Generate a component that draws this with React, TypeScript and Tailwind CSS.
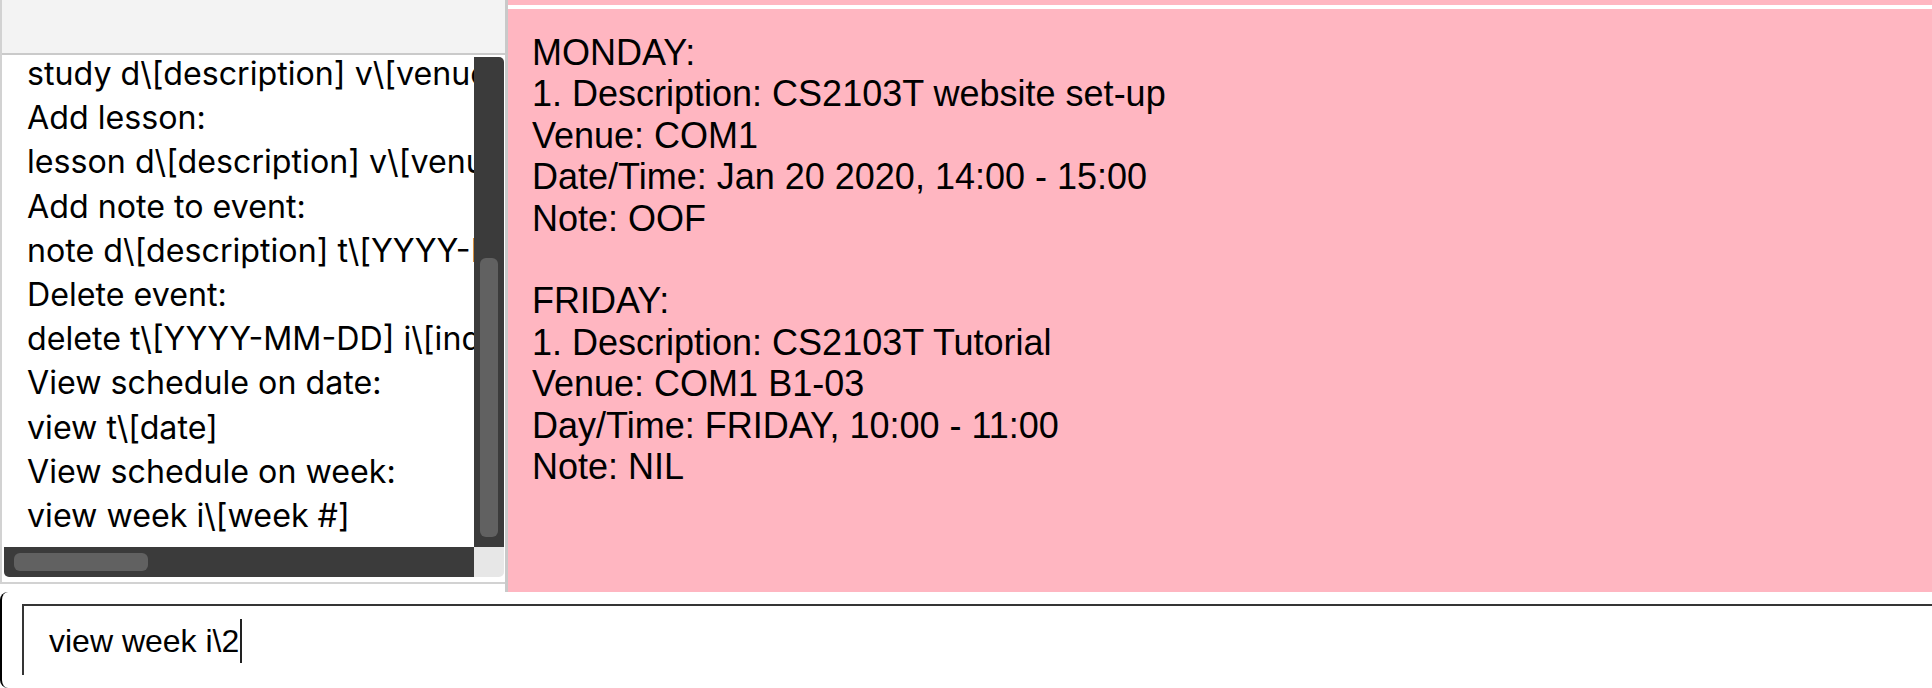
import React from 'react';

const helpLines = [
  'study d\\[description] v\\[venue] t\\[YYYY-MM-DD HH:MM-HH:MM]',
  'Add lesson:',
  'lesson d\\[description] v\\[venue] t\\[DAY HH:MM-HH:MM]',
  'Add note to event:',
  'note d\\[description] t\\[YYYY-MM-DD] i\\[index]',
  'Delete event:',
  'delete t\\[YYYY-MM-DD] i\\[index]',
  'View schedule on date:',
  'view t\\[date]',
  'View schedule on week:',
  'view week i\\[week #]',
];

const scheduleLines = [
  'MONDAY:',
  '1. Description: CS2103T website set-up',
  'Venue: COM1',
  'Date/Time: Jan 20 2020, 14:00 - 15:00',
  'Note: OOF',
  '',
  'FRIDAY:',
  '1. Description: CS2103T Tutorial',
  'Venue: COM1 B1-03',
  'Day/Time: FRIDAY, 10:00 - 11:00',
  'Note: NIL',
];

const HelpPanel: React.FC = () => (
  <div className="flex flex-col w-[508px] h-[592px] border-r-[3px] border-[#c9c9c9] bg-white">
    <div className="flex flex-col h-[584px] border-l-2 border-b-2 border-[#d2d2d2]">
      <div className="h-[55px] bg-[#f3f3f3] border-b-2 border-[#cacaca]" />
      {/* scroll pane */}
      <div className="flex-1 min-h-0 pl-[2px] pt-[2px] pr-[1px] pb-[5px] bg-white">
        <div className="grid h-full grid-cols-[1fr_30px] grid-rows-[1fr_30px]">
          <div className="overflow-hidden bg-white">
            <div
              className="-mt-[5px] pl-[23px] text-[32.2px] leading-[44.2px] text-black whitespace-nowrap"
              style={{ fontFamily: 'Inter, "Noto Sans", sans-serif' }}
            >
              {helpLines.map((l, i) => (
                <div key={i}>{l}</div>
              ))}
            </div>
          </div>
          <div className="bg-[#3b3b3b] rounded-tr-[5px] px-[6px] pt-[201px] pb-[10px]">
            <div className="h-full rounded-[6px] bg-[#616161]" />
          </div>
          <div className="bg-[#3b3b3b] rounded-bl-[5px] pl-[10px] py-[6px]">
            <div className="h-full w-[134px] rounded-[6px] bg-[#616161]" />
          </div>
          <div className="bg-[#e7e7e7] rounded-br-[5px]" />
        </div>
      </div>
    </div>
  </div>
);

const SchedulePanel: React.FC = () => (
  <div className="flex-1 h-[592px] bg-[#ffb6c1] flex flex-col">
    <div className="h-[5px]" />
    <div className="h-[4px] bg-white" />
    <div
      className="pt-[23px] pl-[24px] text-[36px] leading-[41.4px] text-black whitespace-pre"
      style={{ fontFamily: '"Liberation Sans", Arial, sans-serif' }}
    >
      {scheduleLines.map((l, i) => (
        <div key={i}>{l === '' ? ' ' : l}</div>
      ))}
    </div>
  </div>
);

const CommandBox: React.FC = () => (
  <div className="h-[96px] bg-white border-l-2 border-black rounded-l-[8px] pt-[12px] pl-[20px]">
    <div className="h-[71px] border-t-2 border-l-2 border-[#353535] flex items-center pl-[25px]">
      <span
        className="text-[32px] text-black"
        style={{ fontFamily: '"Liberation Sans", Arial, sans-serif' }}
      >
        view week i\2
      </span>
      <span className="inline-block w-[2px] h-[44px] bg-[#222] ml-[1px]" />
    </div>
  </div>
);

export default function App() {
  return (
    <div className="w-[1932px] h-[688px] overflow-hidden bg-white">
      <div className="flex">
        <HelpPanel />
        <SchedulePanel />
      </div>
      <CommandBox />
    </div>
  );
}
